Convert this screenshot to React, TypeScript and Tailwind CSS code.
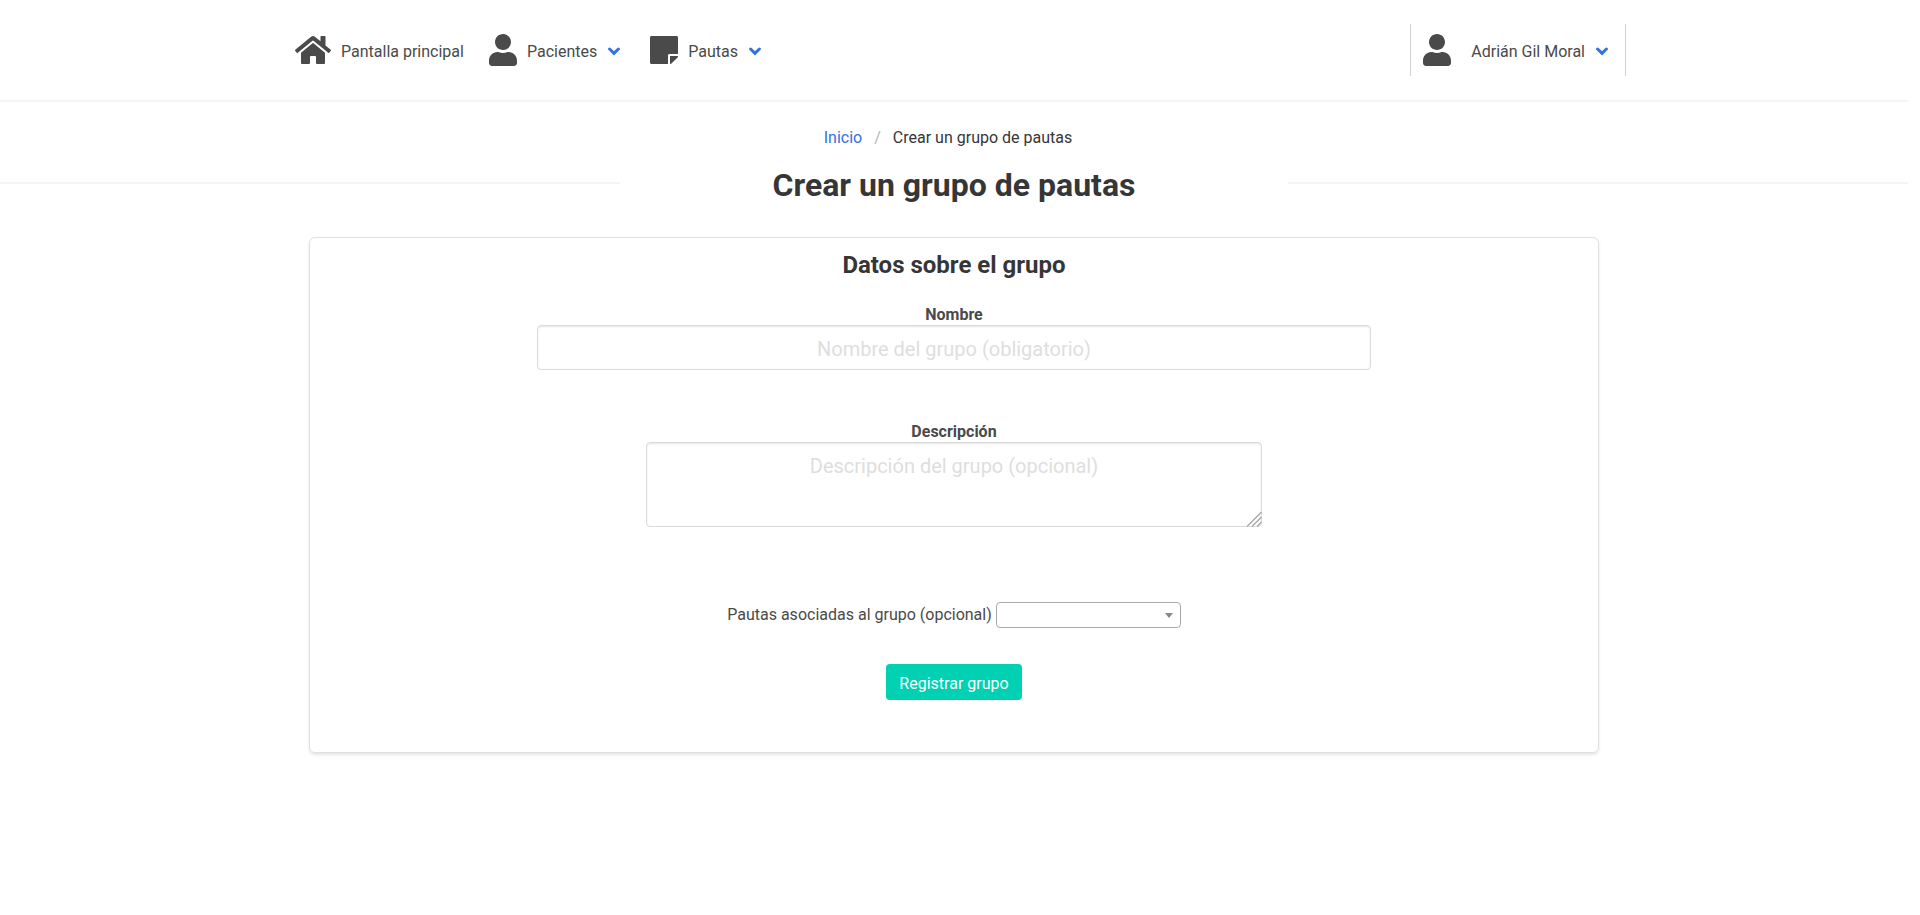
import type { ReactNode } from "react";
import { FaHome, FaStickyNote, FaUser } from "react-icons/fa";

function Arrow() {
  return (
    <span className="flex w-3.5 justify-center pt-[2px]" aria-hidden="true">
      <svg className="h-[9px] w-3" viewBox="0 0 12 9" fill="none" stroke="#3273dc" strokeWidth="3" strokeLinecap="round">
        <path d="M1.6 2L6 6.3L10.4 2" />
      </svg>
    </span>
  );
}

function NavLink({ icon, label, menu }: { icon: ReactNode; label: string; menu?: boolean }) {
  return (
    <a href="#" className={menu ? "flex items-center gap-[10px] pl-[13px] pr-4" : "flex items-center gap-[10px] pl-[13px] pr-3"}>
      {icon}
      <span className="pt-[3px]">{label}</span>
      {menu && <Arrow />}
    </a>
  );
}

export default function App() {
  return (
    <div className="min-h-screen bg-white pr-3 font-[Roboto,sans-serif] text-base leading-6 text-[#4a4a4a]">
      <nav className="border-b-2 border-[#f5f5f5]">
        <div className="mx-auto flex h-[100px] max-w-[1344px] items-center justify-between">
          <div className="flex items-center">
            <NavLink icon={<FaHome className="h-8 w-9" />} label="Pantalla principal" />
            <NavLink icon={<FaUser className="h-8 w-7" />} label="Pacientes" menu />
            <NavLink icon={<FaStickyNote className="h-8 w-7" />} label="Pautas" menu />
          </div>
          <a href="#" className="flex h-[52px] items-center border-x border-[#d0d1cd] pl-3 pr-4">
            <FaUser className="mr-5 h-8 w-7" />
            <span className="mr-[10px] pt-[3px]">Adrián Gil Moral</span>
            <Arrow />
          </a>
        </div>
      </nav>

      <header className="pt-6">
        <ol className="flex justify-center">
          <li className="pr-3">
            <a href="#" className="text-[#3273dc]">Inicio</a>
          </li>
          <li className="flex">
            <span className="text-[#b5b5b5]" aria-hidden="true">/</span>
            <a href="#" aria-current="page" className="px-3 text-[#363636]">Crear un grupo de pautas</a>
          </li>
        </ol>
        <div className="mt-3 flex items-start">
          <div className="mt-5 h-[2px] flex-1 bg-[#f5f5f5]" />
          <h1 className="w-[35%] text-center text-[32px] leading-[46px] font-bold text-[#363636]">
            Crear un grupo de pautas
          </h1>
          <div className="mt-5 h-[2px] flex-1 bg-[#f5f5f5]" />
        </div>
      </header>

      <main className="mx-auto mt-[29px] max-w-[1344px]">
        <form className="mx-auto flex w-[96%] flex-col items-center rounded-md border border-[#e0e0e0] px-5 pt-[9px] pb-[52px] shadow-[0_2px_3px_rgba(10,10,10,0.1)]">
          <h2 className="text-2xl leading-9 font-bold text-[#363636]">Datos sobre el grupo</h2>

          <label htmlFor="nombre" className="mt-[22px] leading-5 font-bold">Nombre</label>
          <input
            id="nombre"
            type="text"
            placeholder="Nombre del grupo (obligatorio)"
            className="h-[45px] w-full max-w-[834px] rounded border border-[#dbdbdb] px-3 pt-[2px] text-center text-xl shadow-[inset_0_1px_2px_rgba(10,10,10,0.1)] placeholder:text-[#dedede]"
          />

          <label htmlFor="descripcion" className="mt-[52px] leading-5 font-bold">Descripción</label>
          <div className="relative flex w-full max-w-[616px]">
            <textarea
              id="descripcion"
              placeholder="Descripción del grupo (opcional)"
              className="h-[85px] w-full resize-none rounded border border-[#dbdbdb] px-3 py-2 text-center text-xl leading-[30px] shadow-[inset_0_1px_2px_rgba(10,10,10,0.1)] placeholder:text-[#dedede]"
            />
            <svg className="absolute right-0 bottom-0 size-4" viewBox="0 0 16 16" fill="none" stroke="#a8a8a8" strokeWidth="1.4" aria-hidden="true">
              <path d="M1 15.5L15.5 1M6 15.5L15.5 6M11 15.5L15.5 11" />
            </svg>
          </div>

          <div className="mt-[75px] flex items-center gap-1">
            <label htmlFor="pautas">Pautas asociadas al grupo (opcional)</label>
            <div className="relative flex">
              <select id="pautas" className="h-[26px] w-[185px] appearance-none rounded border border-[#aaa] bg-white px-2">
                <option></option>
              </select>
              <svg className="pointer-events-none absolute top-[11px] right-2 h-[5px] w-2" viewBox="0 0 8 5" fill="#888" aria-hidden="true">
                <path d="M0 0H8L4 5Z" />
              </svg>
            </div>
          </div>

          <button type="submit" className="mt-9 h-9 w-[136px] rounded bg-[#00d1b2] pt-1 text-white">
            Registrar grupo
          </button>
        </form>
      </main>
    </div>
  );
}
